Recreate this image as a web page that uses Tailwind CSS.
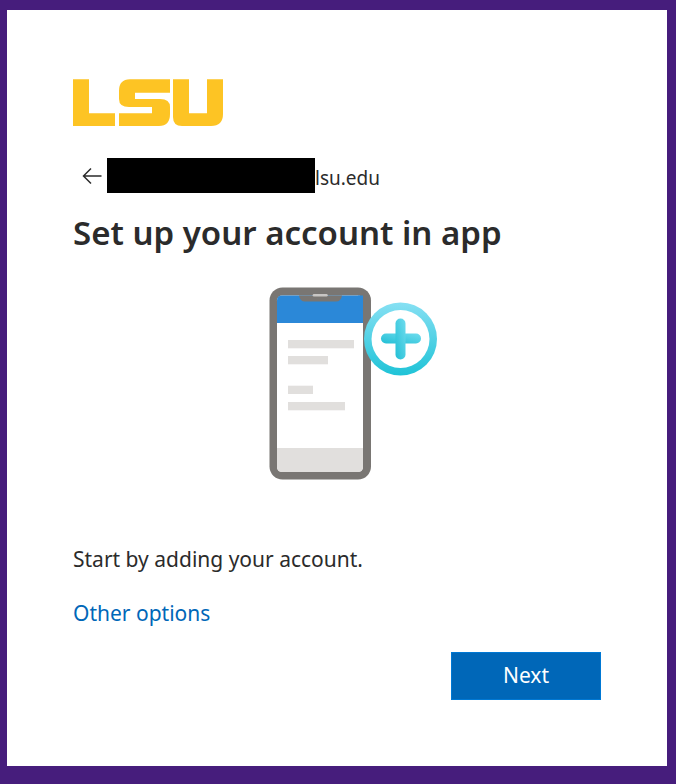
<!doctype html>
<html lang="en">
  <head>
    <meta charset="UTF-8" />
    <meta name="viewport" content="width=device-width, initial-scale=1.0" />
    <script src="https://cdn.jsdelivr.net/npm/@tailwindcss/browser@4"></script>
    <title>Set up your account in app</title>
  </head>

  <body class="h-[784px] overflow-hidden bg-[#461d7c] pt-[10px] pl-[7px] font-['Noto_Sans',sans-serif] text-[#2b2b2b]">
    <main class="h-[756px] w-[660px] bg-white pt-[69px] pl-[66px]">
      <!-- logo -->
      <svg class="block" width="151" height="48" viewBox="73 79 151 48" fill="#fdc424" aria-label="LSU">
        <path d="M73 79.3h16v34h26V126H73z" />
        <path d="M119 91q0-11.700 11-11.700h40v13.400h-35v6.300h25q10 0 10 8v7q0 12-11 12h-40v-12.700h33v-6.300h-23q-10 0-10-8z" />
        <path d="M173 79.300h16v34h18v-34h16V114q0 12-12 12h-29q-9 0-9-9z" />
      </svg>

      <!-- identity row -->
      <div class="mt-[31px] flex h-[35px] items-center text-[19px] leading-[35px]">
        <svg class="ml-[9px] mr-[5px] shrink-0" width="20" height="18" viewBox="0 0 20 18" fill="none" stroke="#2b2b2b" stroke-width="1.5" aria-hidden="true">
          <path d="M19.500 9H1.500M9 1.500 1.500 9 9 16.500" />
        </svg>
        <div class="h-[35px] w-[208px] bg-black"></div>
        <span class="relative top-[3px]">lsu.edu</span>
      </div>

      <h1 class="mt-[15px] text-[33px] leading-[50px] font-semibold">Set up your account in app</h1>

      <!-- illustration -->
      <div class="mt-[29px] ml-[196px]">
        <svg class="block" width="170" height="194" viewBox="269 287 170 194" aria-hidden="true">
          <defs>
            <linearGradient id="ring" x1="0" y1="0" x2="0" y2="1">
              <stop offset="0" stop-color="#86e0f3" />
              <stop offset="1" stop-color="#1fc3d7" />
            </linearGradient>
            <linearGradient id="plus" x1="1" y1="0" x2="0" y2="1">
              <stop offset="0" stop-color="#6fdcee" />
              <stop offset="1" stop-color="#22bfd5" />
            </linearGradient>
          </defs>
          <rect x="269.500" y="287.500" width="101.500" height="192" rx="13" fill="#797673" />
          <rect x="277" y="295.500" width="86" height="176.500" rx="5" fill="#fff" />
          <path d="M277 323v-22.500q0-5 5-5h81v0q0 0 0 0v27.500z" fill="#2b88d8" />
          <path d="M358 295.500q5 0 5 5v10h-5z" fill="#2b88d8" />
          <path d="M299 295.500h43q-1 6-6 6h-31q-5 0-6-6z" fill="#797673" />
          <rect x="312.700" y="294" width="15" height="2.500" rx="1.200" fill="#c8c6c4" />
          <path d="M277 448h86v19q0 5-5 5h-76q-5 0-5-5z" fill="#e1dfdd" />
          <rect x="288" y="340" width="66" height="8.300" fill="#e1dfdd" />
          <rect x="288" y="356" width="40" height="8.300" fill="#e1dfdd" />
          <rect x="288" y="385.700" width="25" height="8.300" fill="#e1dfdd" />
          <rect x="288" y="402" width="57" height="8.300" fill="#e1dfdd" />
          <circle cx="400.500" cy="339" r="36.500" fill="url(#ring)" />
          <circle cx="400.500" cy="339" r="29" fill="#fff" />
          <rect x="381" y="333.500" width="40" height="10" rx="5" fill="url(#plus)" />
          <rect x="395.500" y="318.500" width="10" height="41" rx="5" fill="url(#plus)" />
        </svg>
      </div>

      <p class="mt-[62px] text-[21px] leading-[32px]">Start by adding your account.</p>
      <a class="mt-[22px] block text-[21px] leading-[32px] text-[#0067b8]" href="#">Other options</a>

      <div class="mt-[23px] ml-[378px]">
        <button class="h-[48px] w-[150px] border border-[#0078d4] bg-[#0067b8] text-[21px] text-white" type="button">Next</button>
      </div>
    </main>
  </body>
</html>
